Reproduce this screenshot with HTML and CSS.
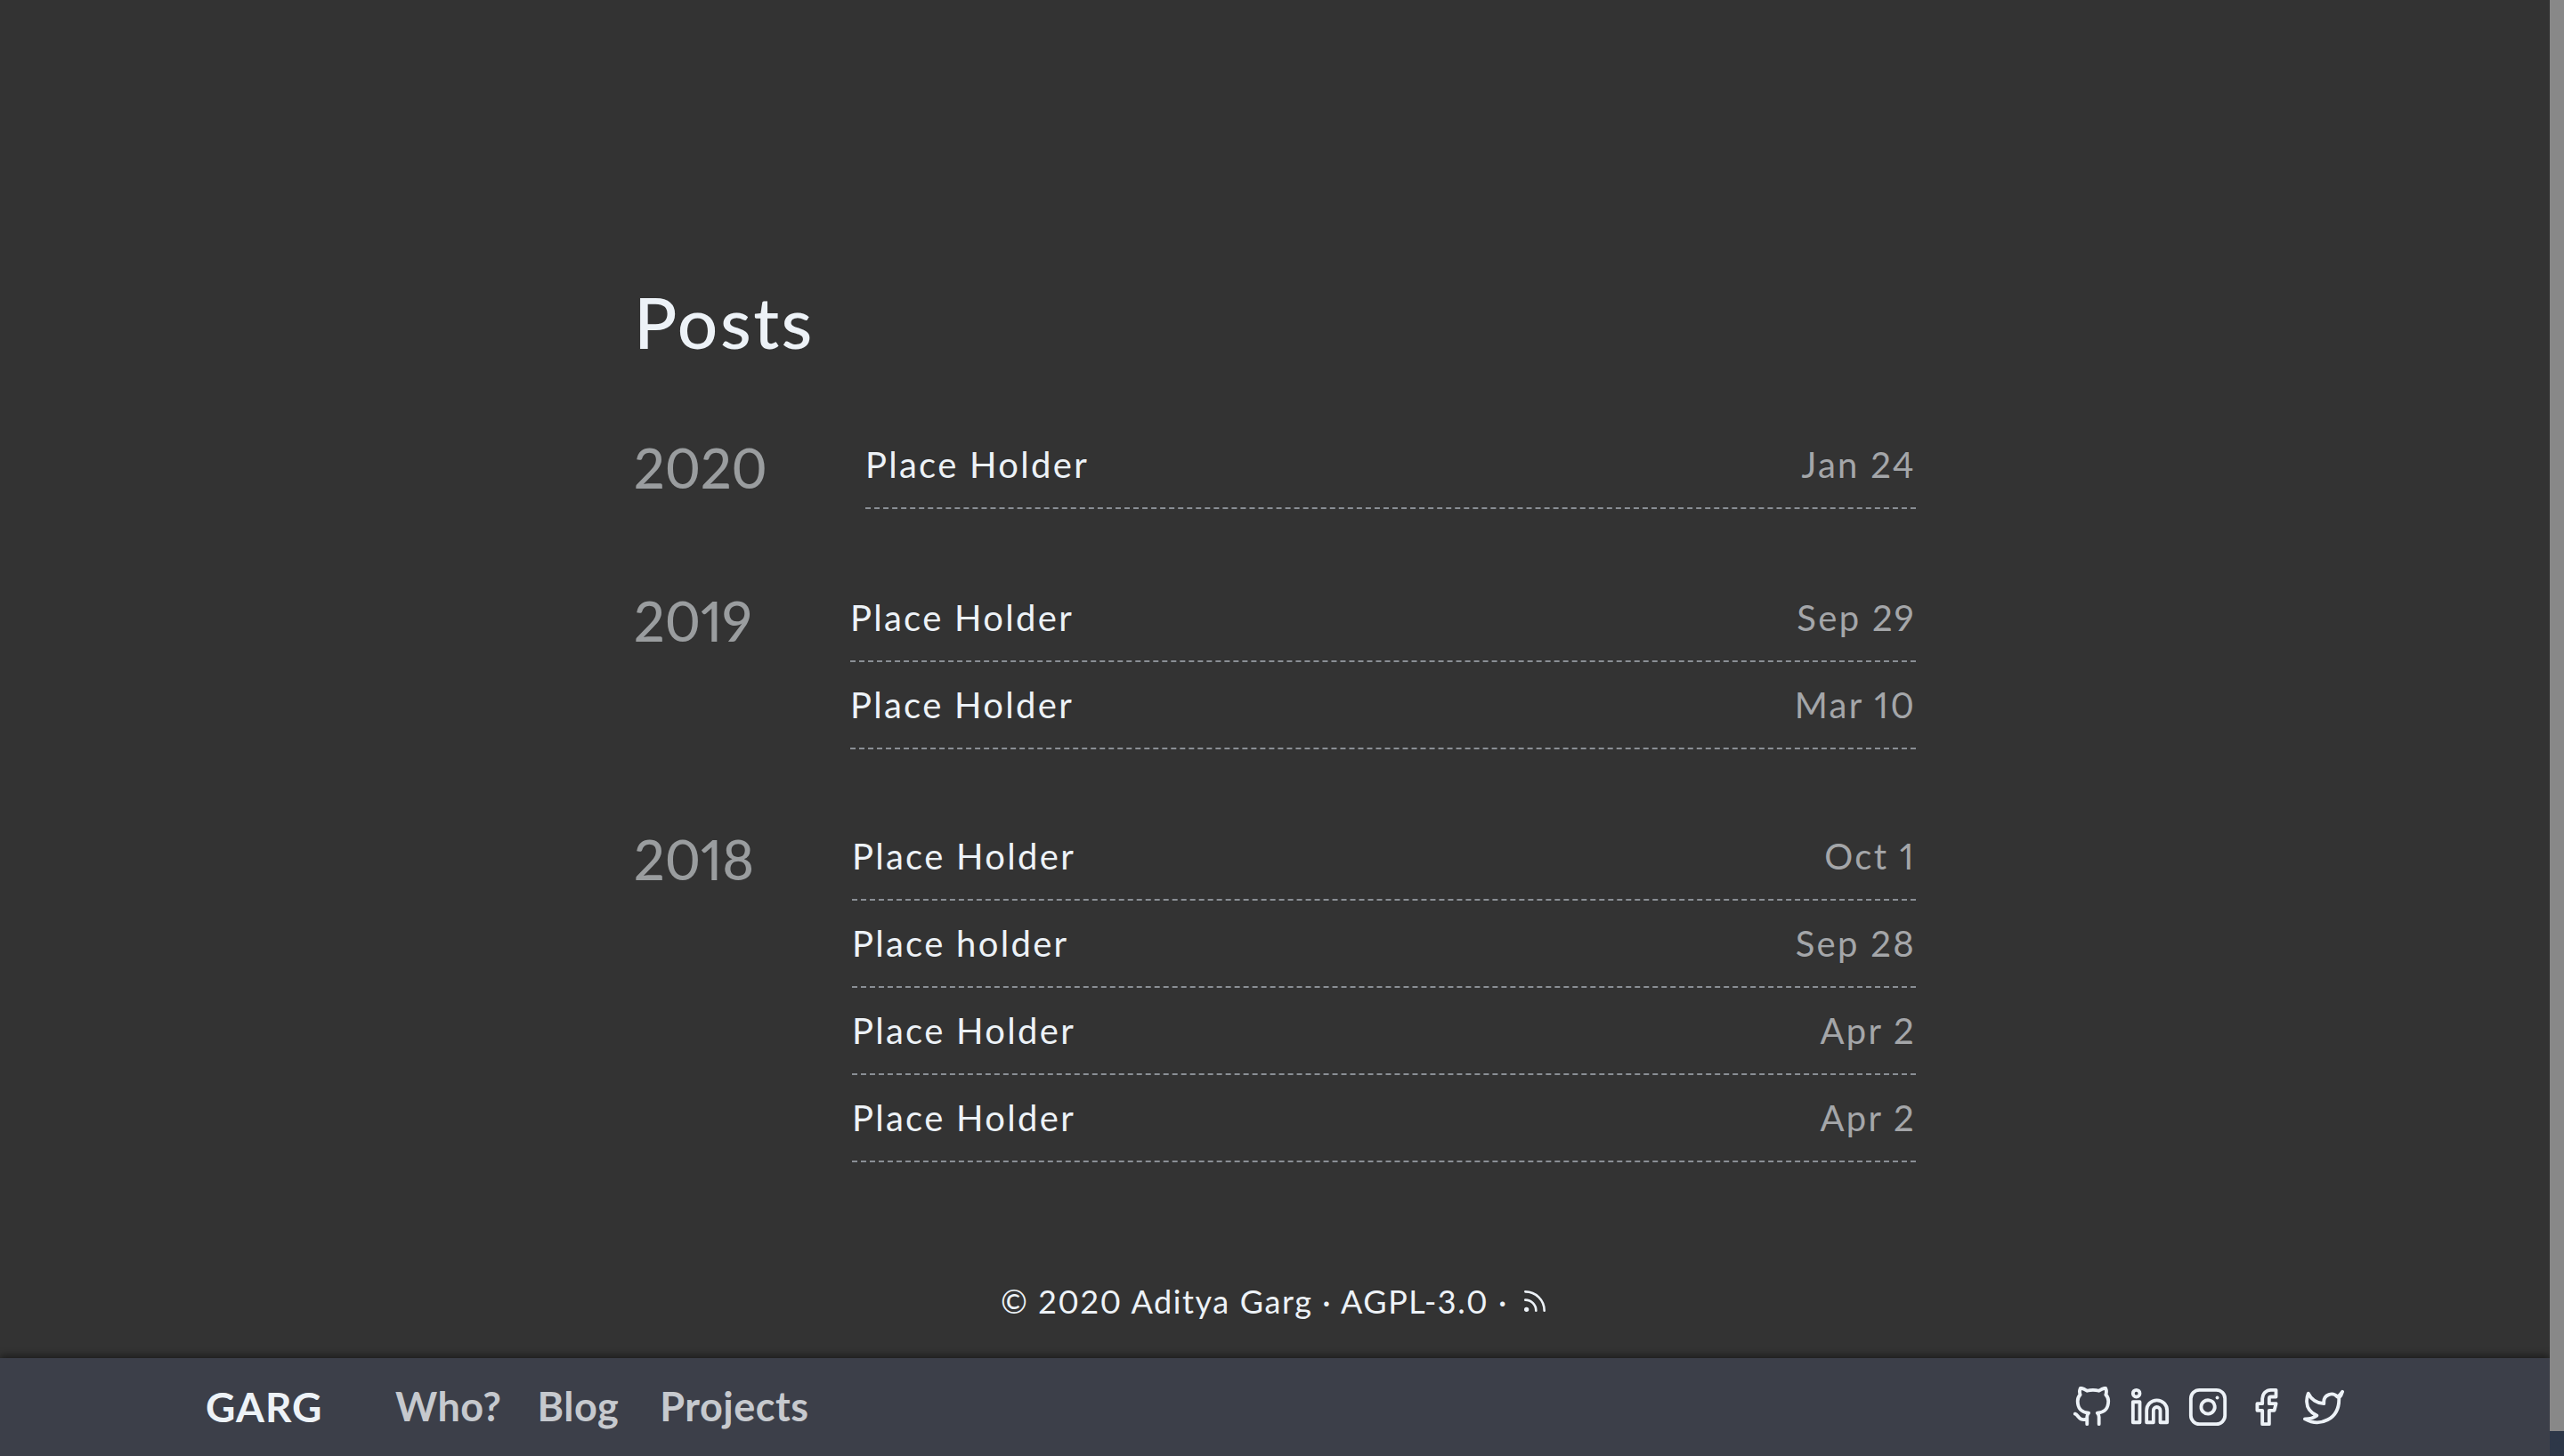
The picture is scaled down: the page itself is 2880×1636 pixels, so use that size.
FILE: index.html
```html
<!DOCTYPE html>
<html lang="en">
<head>
    <meta charset="UTF-8">
    <meta name="viewport" content="width=device-width, initial-scale=1.0">
    <title>Posts - Aditya Garg</title>
    <link rel="stylesheet" href="styles.css">
</head>
<body>
    <div class="page">
        <main class="container">
            <h1>Posts</h1>

            <section class="year-group year-2020">
                <h2>2020</h2>
                <ul>
                    <li><a href="#">Place Holder</a><time>Jan 24</time></li>
                </ul>
            </section>

            <section class="year-group year-2019">
                <h2>2019</h2>
                <ul>
                    <li><a href="#">Place Holder</a><time>Sep 29</time></li>
                    <li><a href="#">Place Holder</a><time>Mar 10</time></li>
                </ul>
            </section>

            <section class="year-group year-2018">
                <h2>2018</h2>
                <ul>
                    <li><a href="#">Place Holder</a><time>Oct 1</time></li>
                    <li><a href="#">Place holder</a><time>Sep 28</time></li>
                    <li><a href="#">Place Holder</a><time>Apr 2</time></li>
                    <li><a href="#">Place Holder</a><time>Apr 2</time></li>
                </ul>
            </section>
        </main>

        <footer>
            <span>© 2020 Aditya Garg · AGPL-3.0 ·</span>
            <svg class="rss" viewBox="0 0 24 24">
                <path d="M4 11a9 9 0 0 1 9 9"></path>
                <path d="M4 4a16 16 0 0 1 16 16"></path>
                <circle cx="5" cy="19" r="1"></circle>
            </svg>
        </footer>

        <nav>
            <a class="brand" href="#">GARG</a>
            <div class="nav-links">
                <a href="#">Who?</a>
                <a href="#">Blog</a>
                <a href="#">Projects</a>
            </div>
            <div class="social">
                <a href="#" aria-label="GitHub">
                    <svg viewBox="0 0 24 24"><path d="M9 19c-5 1.5-5-2.5-7-3m14 6v-3.87a3.37 3.37 0 0 0-.94-2.61c3.14-.35 6.44-1.54 6.44-7A5.44 5.44 0 0 0 20 4.77 5.07 5.07 0 0 0 19.91 1S18.73.65 16 2.48a13.38 13.38 0 0 0-7 0C6.27.65 5.09 1 5.09 1A5.07 5.07 0 0 0 5 4.77a5.44 5.44 0 0 0-1.5 3.75c0 5.42 3.3 6.61 6.44 7A3.37 3.37 0 0 0 9 18.13V22"></path></svg>
                </a>
                <a href="#" aria-label="LinkedIn">
                    <svg viewBox="0 0 24 24"><path d="M16 8a6 6 0 0 1 6 6v7h-4v-7a2 2 0 0 0-2-2 2 2 0 0 0-2 2v7h-4v-7a6 6 0 0 1 6-6z"></path><rect x="2" y="9" width="4" height="12"></rect><circle cx="4" cy="4" r="2"></circle></svg>
                </a>
                <a href="#" aria-label="Instagram">
                    <svg viewBox="0 0 24 24"><rect x="2" y="2" width="20" height="20" rx="5" ry="5"></rect><path d="M16 11.37A4 4 0 1 1 12.63 8 4 4 0 0 1 16 11.37z"></path><line x1="17.5" y1="6.5" x2="17.51" y2="6.5"></line></svg>
                </a>
                <a href="#" aria-label="Facebook">
                    <svg viewBox="0 0 24 24"><path d="M18 2h-3a5 5 0 0 0-5 5v3H7v4h3v8h4v-8h3l1-4h-4V7a1 1 0 0 1 1-1h3z"></path></svg>
                </a>
                <a href="#" aria-label="Twitter">
                    <svg viewBox="0 0 24 24"><path d="M23 3a10.9 10.9 0 0 1-3 3 4.48 4.48 0 0 0-7.86 3v1A10.66 10.66 0 0 1 3 4s-4 9 5 13a11.64 11.64 0 0 1-7 2c9 5 20 0 20-11.5a4.5 4.5 0 0 0-.08-.83A7.72 7.72 0 0 0 23 3z"></path></svg>
                </a>
            </div>
        </nav>
    </div>

    <div class="scrollbar">
        <div class="scrollbar-thumb"></div>
    </div>
</body>
</html>
```

FILE: styles.css
```css
body {
    font-family: Lato, "Open Sans", sans-serif;
    font-variant-numeric: proportional-nums;
    margin: 0;
    background-color: #333;
    color: #edf2f7;
    display: flex;
    height: 100vh;
    overflow: hidden;
}
a {
    color: inherit;
    text-decoration: none;
}
.page {
    flex: 1;
    display: flex;
    flex-direction: column;
    min-width: 0;
}
.container {
    flex: 1;
    width: 1440px;
    margin: 0 auto;
}
h1 {
    margin: 311px 0 63px;
    font-size: 80px;
    line-height: 100px;
    font-weight: 500;
    letter-spacing: 2.5px;
}
.year-group {
    display: flex;
    align-items: flex-start;
}
.year-group h2 {
    margin: 0;
    padding-top: 16px;
    font-size: 61px;
    line-height: 72px;
    font-weight: 500;
    color: #9a9d9f;
}
.year-2020 {
    margin-bottom: 74px;
}
.year-2019 {
    margin-bottom: 72px;
}
.year-2020 h2 {
    width: 260px;
}
.year-2019 h2 {
    width: 243px;
}
.year-2018 h2 {
    width: 245px;
}
.year-group ul {
    flex: 1;
    list-style: none;
    margin: 0;
    padding: 0;
}
.year-group li {
    display: flex;
    justify-content: space-between;
    align-items: baseline;
    box-sizing: border-box;
    height: 98px;
    line-height: 96px;
    font-size: 40px;
    letter-spacing: 2.3px;
    border-bottom: 2px dashed #8a8f95;
}
.year-group time {
    color: #a4a6a9;
}
footer {
    display: flex;
    justify-content: center;
    align-items: center;
    gap: 14px;
    height: 50px;
    margin-bottom: 39px;
    font-size: 36px;
    letter-spacing: 1.6px;
}
.rss {
    width: 32px;
    height: 32px;
    fill: none;
    stroke: #edf2f7;
    stroke-width: 2;
    stroke-linecap: round;
    stroke-linejoin: round;
}
nav {
    display: flex;
    align-items: center;
    height: 110px;
    padding: 0 231px;
    background: #3c3f49;
    box-shadow: 0 -3px 8px rgba(0, 0, 0, 0.45);
}
.brand {
    width: 213px;
    padding-bottom: 2px;
    font-size: 46px;
    font-weight: 700;
    letter-spacing: 1px;
    color: #edf2f7;
}
.nav-links {
    display: flex;
    gap: 46px;
    padding-bottom: 2px;
    font-size: 45px;
    font-weight: 700;
    letter-spacing: 0.5px;
    color: #c6c9ce;
}
.nav-links a:first-child {
    margin-right: -6px;
}
.social {
    display: flex;
    gap: 19px;
    margin-left: auto;
}
.social a {
    display: block;
    height: 46px;
}
.social svg {
    display: block;
    width: 46px;
    height: 46px;
    fill: none;
    stroke: #edf2f7;
    stroke-width: 2;
    stroke-linecap: round;
    stroke-linejoin: round;
}
.scrollbar {
    width: 16px;
    background: #2d3748;
}
.scrollbar-thumb {
    height: 1608px;
    background: #888;
}
```
